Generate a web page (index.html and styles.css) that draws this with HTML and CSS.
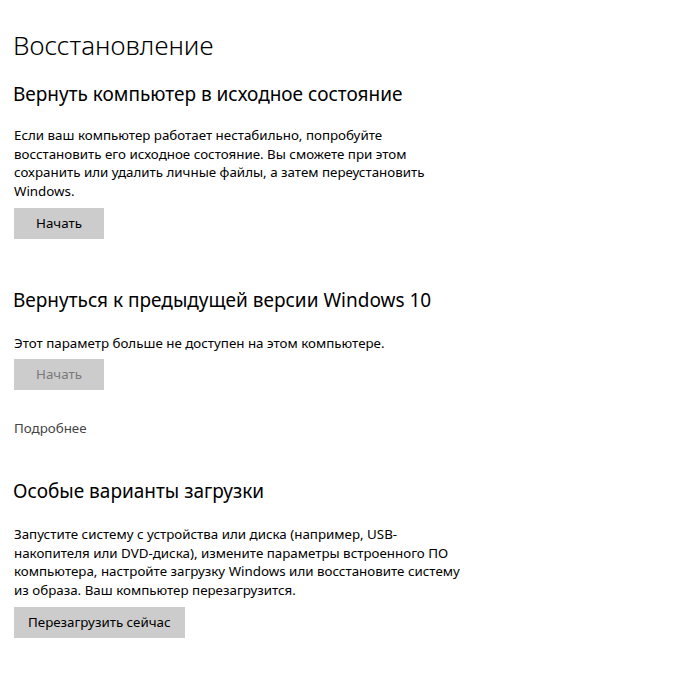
FILE: index.html
```html
<!DOCTYPE html>
<html lang="ru">
<head>
<meta charset="utf-8">
<title>Восстановление</title>
<link rel="stylesheet" href="styles.css">
</head>
<body>
<main class="page">
  <h1 class="title">Восстановление</h1>

  <section class="section s-reset">
    <h2 class="heading">Вернуть компьютер в исходное состояние</h2>
    <p class="text">Если ваш компьютер работает нестабильно, попробуйте<br>восстановить его исходное состояние. Вы сможете при этом<br>сохранить или удалить личные файлы, а затем переустановить<br>Windows.</p>
    <button class="btn" type="button">Начать</button>
  </section>

  <section class="section s-back">
    <h2 class="heading">Вернуться к предыдущей версии Windows 10</h2>
    <p class="text">Этот параметр больше не доступен на этом компьютере.</p>
    <button class="btn btn-disabled" type="button" disabled>Начать</button>
    <a class="more" href="#">Подробнее</a>
  </section>

  <section class="section s-boot">
    <h2 class="heading">Особые варианты загрузки</h2>
    <p class="text">Запустите систему с устройства или диска (например, USB-<br>накопителя или DVD-диска), измените параметры встроенного ПО<br>компьютера, настройте загрузку Windows или восстановите систему<br>из образа. Ваш компьютер перезагрузится.</p>
    <button class="btn" type="button">Перезагрузить сейчас</button>
  </section>
</main>
</body>
</html>
```

FILE: styles.css
```css
html, body {
  margin: 0;
  padding: 0;
  background: #ffffff;
}

body {
  font-family: "Noto Sans", "Open Sans", "Liberation Sans", sans-serif;
  color: #000000;
}

.page {
  display: flex;
  flex-direction: column;
  align-items: flex-start;
  padding: 25px 13px 0 13px;
}

.title {
  margin: 0;
  font-size: 26px;
  font-weight: 300;
  line-height: 40px;
}

.section {
  display: flex;
  flex-direction: column;
  align-items: flex-start;
}

.heading {
  margin: 0;
  font-size: 19px;
  font-weight: 400;
  line-height: 28px;
}

.text {
  margin: 18px 0 0 1px;
  font-size: 13.35px;
  line-height: 18.67px;
}

.btn {
  margin: 7px 0 0 1px;
  height: 31px;
  min-width: 90px;
  padding: 0 14px;
  border: none;
  background: #cccccc;
  color: #000000;
  font-family: inherit;
  font-size: 13.35px;
  line-height: 31px;
  text-align: center;
}

.btn-disabled {
  color: #7a7a7a;
}

.more {
  margin: 29px 0 0 1px;
  font-size: 13.35px;
  line-height: 18.67px;
  color: #444444;
  text-decoration: none;
}

.s-reset { margin-top: 15px; }
.s-back { margin-top: 47px; }
.s-back .text { margin-top: 20px; }
.s-boot { margin-top: 39px; }
.s-boot .text { margin-top: 20px; }
```
